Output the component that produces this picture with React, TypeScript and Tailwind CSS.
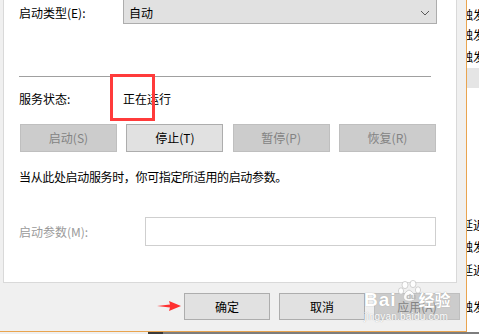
const font = { fontFamily: '"Noto Sans CJK SC", sans-serif' };

function Btn({ label, disabled, w = "w-[97px]" }: { label: string; disabled?: boolean; w?: string }) {
  return (
    <div
      className={`${w} h-full flex items-center justify-center border text-[12px] ${
        disabled
          ? "bg-[#cccccc] border-[#bfbfbf] text-[#838383]"
          : "bg-[#e1e1e1] border-[#adadad] text-black"
      }`}
    >
      {label}
    </div>
  );
}

function Watermark() {
  return (
    <div className="absolute left-[364px] top-[280px] w-[94px] h-[44px] text-white pointer-events-none" style={{ textShadow: "0 0 1px #9a9a9a" }}>
      <div className="flex items-start">
        <span className="mt-[10px] text-[19px] leading-[20px] font-bold tracking-[1px]" style={{ fontFamily: '"Liberation Sans", sans-serif' }}>
          Bai
        </span>
        <svg width="26" height="24" viewBox="0 0 26 24" className="mt-[0px]">
          <g fill="#ffffff" stroke="#b5b5b5" strokeWidth="0.6" opacity="0.95">
            <ellipse cx="8" cy="5" rx="3" ry="3.6" />
            <ellipse cx="16" cy="4" rx="3" ry="3.6" />
            <ellipse cx="4" cy="11" rx="2.6" ry="3.2" />
            <ellipse cx="21" cy="10" rx="2.6" ry="3.2" />
            <path d="M12 10 C7 12 5 18 8 20 C10 21.5 14 21.5 17 20 C20 18 17 12 12 10 Z" />
          </g>
          <text x="9.5" y="19" fontSize="8" fill="#b5b5b5" style={{ fontFamily: '"Liberation Sans", sans-serif' }}>
            du
          </text>
        </svg>
        <span className="mt-[11px] ml-[-4px] text-[16px] leading-[16px] font-bold" style={font}>
          经验
        </span>
      </div>
      <div className="text-[10px] leading-[10px] mt-[2px] tracking-[0.2px]" style={{ fontFamily: '"Liberation Sans", sans-serif' }}>
        jingyan.baidu.com
      </div>
    </div>
  );
}

function SideText({ text, top }: { text: string; top: number }) {
  return (
    <div className="absolute left-[-6px] text-[12px] leading-[14px] text-black whitespace-nowrap" style={{ top, ...font }}>
      {text}
    </div>
  );
}

export default function App() {
  return (
    <div className="relative w-[479px] h-[334px] overflow-hidden bg-white" style={font}>
      <div className="flex h-[332px]">
        {/* dialog */}
        <div className="w-[467px] h-full bg-[#f0f0f0] border-r border-b border-[#e9a44f] flex flex-col">
          <div className="ml-[3px] w-[454px] h-[283px] bg-white border-l border-r border-b border-[#d9d9d9] pl-[15px] flex flex-col text-[12px] text-black">
            <div className="flex h-[24px] items-center">
              <span className="w-[104px] pt-[2px]">启动类型(E):</span>
              <div className="w-[314px] h-[24px] bg-[#e1e1e1] border-x border-b border-[#adadad] flex items-center justify-between pl-[5px] pr-[6px] pt-[2px]">
                <span>自动</span>
                <svg width="10" height="6" viewBox="0 0 10 6">
                  <polyline points="1,1 5,5 9,1" fill="none" stroke="#5a5a5a" strokeWidth="1" />
                </svg>
              </div>
            </div>
            <div className="mt-[52px] h-px w-[412px] bg-[#a0a0a0]" />
            <div className="mt-[13px] h-[18px] flex items-center">
              <span className="w-[104px]">服务状态:</span>
              <span>正在运行</span>
            </div>
            <div className="mt-[16px] ml-[1px] h-[28px] w-[416px] flex justify-between">
              <Btn label="启动(S)" disabled />
              <Btn label="停止(T)" />
              <Btn label="暂停(P)" disabled />
              <Btn label="恢复(R)" disabled />
            </div>
            <div className="mt-[16px] h-[18px] flex items-center tracking-[-0.35px]">
              当从此处启动服务时，你可指定所适用的启动参数。
            </div>
            <div className="mt-[31px] flex items-center h-[29px]">
              <span className="w-[126px] text-[#9a9a9a]">启动参数(M):</span>
              <div className="w-[291px] h-full border border-[#cfcfcf] bg-white" />
            </div>
          </div>
          <div className="mt-[10px] h-[27px] flex pl-[184px] gap-[9px]">
            <Btn label="确定" w="w-[86px]" />
            <Btn label="取消" w="w-[86px]" />
            <Btn label="应用(A)" w="w-[86px]" disabled />
          </div>
        </div>
        {/* list behind the dialog */}
        <div className="relative flex-1 h-full bg-white overflow-hidden">
          <SideText text="触发" top={8} />
          <SideText text="触发" top={28} />
          <SideText text="触发" top={50} />
          <div className="absolute left-0 top-[68px] w-full h-[20px] bg-[#e5e5e5]" />
          <SideText text="延迟" top={218} />
          <SideText text="触发" top={240} />
          <SideText text="延迟" top={263} />
          <SideText text="触发" top={300} />
        </div>
      </div>
      <div className="flex h-[2px]">
        <div className="w-[148px] bg-[#f0f0f0]" />
        <div className="w-[15px] bg-[#3a3a3a]" />
        <div className="flex-1 bg-[#7d7d7d]" />
      </div>

      {/* annotations */}
      <div className="absolute left-[110px] top-[74px] w-[45px] h-[47px] border-[3px] border-[#ff3b3b]" />
      <svg className="absolute left-[156px] top-[300px]" width="26" height="12" viewBox="0 0 26 12">
        <path d="M1 6 L14 4.6 L13 1 L25 6 L13 11 L14 7.4 Z" fill="#ff3030" />
      </svg>
      <Watermark />
    </div>
  );
}
